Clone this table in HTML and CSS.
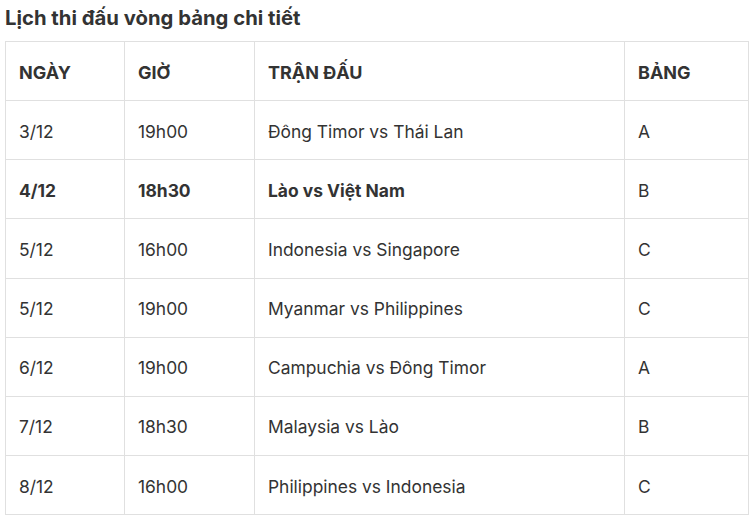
FILE: index.html
```html
<!DOCTYPE html>
<html lang="vi">
<head>
<meta charset="utf-8">
<link rel="stylesheet" href="styles.css">
</head>
<body>
<h2 class="title">Lịch thi đấu vòng bảng chi tiết</h2>
<table class="schedule">
  <colgroup>
    <col class="c1"><col class="c2"><col class="c3"><col class="c4">
  </colgroup>
  <thead>
    <tr><th>NGÀY</th><th>GIỜ</th><th>TRẬN ĐẤU</th><th>BẢNG</th></tr>
  </thead>
  <tbody>
    <tr><td>3/12</td><td>19h00</td><td>Đông Timor vs Thái Lan</td><td>A</td></tr>
    <tr class="hl"><td>4/12</td><td>18h30</td><td>Lào vs Việt Nam</td><td class="plain">B</td></tr>
    <tr><td>5/12</td><td>16h00</td><td>Indonesia vs Singapore</td><td>C</td></tr>
    <tr><td>5/12</td><td>19h00</td><td>Myanmar vs Philippines</td><td>C</td></tr>
    <tr><td>6/12</td><td>19h00</td><td>Campuchia vs Đông Timor</td><td>A</td></tr>
    <tr><td>7/12</td><td>18h30</td><td>Malaysia vs Lào</td><td>B</td></tr>
    <tr><td>8/12</td><td>16h00</td><td>Philippines vs Indonesia</td><td>C</td></tr>
  </tbody>
</table>
</body>
</html>
```
FILE: styles.css
```css
html, body {
  margin: 0;
  padding: 0;
  background: #fff;
}
body {
  padding: 0 5px;
  font-family: Inter, "Noto Sans", sans-serif;
  color: #333;
}
.title {
  margin: 0;
  padding-top: 5px;
  height: 41px;
  box-sizing: border-box;
  font-size: 20.3px;
  font-weight: 700;
  line-height: 26px;
  color: #333;
}
.schedule {
  width: 743px;
  border-collapse: collapse;
  table-layout: fixed;
}
.c1 { width: 119px; }
.c2 { width: 130px; }
.c3 { width: 370px; }
.c4 { width: 124px; }
.schedule th, .schedule td {
  border: 1px solid #e0e0e0;
  height: 59.15px;
  box-sizing: border-box;
  padding: 3px 13px 0;
  text-align: left;
  vertical-align: middle;
  font-size: 17.4px;
  line-height: 22px;
}
.schedule th {
  font-size: 18px;
  font-weight: 700;
}
.schedule td {
  font-weight: 400;
}
.schedule tr.hl td {
  font-weight: 700;
}
.schedule tr.hl td.plain {
  font-weight: 400;
}
```
